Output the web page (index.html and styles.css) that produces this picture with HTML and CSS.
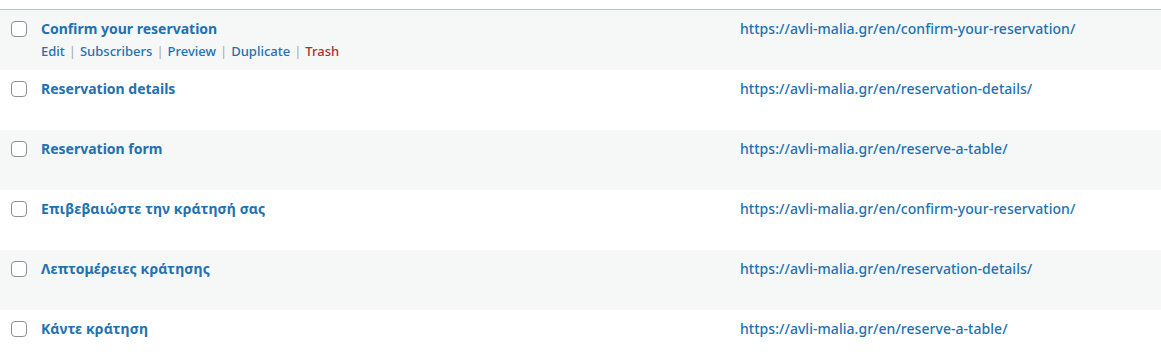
FILE: index.html
```html
<!DOCTYPE html>
<html lang="en">
<head>
<meta charset="utf-8">
<title>Forms</title>
<link rel="stylesheet" href="styles.css">
</head>
<body>
<div class="table">
  <div class="row alt">
    <div class="cb"><span class="box"></span></div>
    <div class="title">
      <a class="name" href="#">Confirm your reservation</a>
      <div class="actions">
        <a href="#">Edit</a><span class="sep">|</span><a href="#">Subscribers</a><span class="sep">|</span><a href="#">Preview</a><span class="sep">|</span><a href="#">Duplicate</a><span class="sep">|</span><a href="#" class="trash">Trash</a>
      </div>
    </div>
    <div class="url"><a href="#">https://avli-malia.gr/en/confirm-your-reservation/</a></div>
  </div>
  <div class="row">
    <div class="cb"><span class="box"></span></div>
    <div class="title"><a class="name" href="#">Reservation details</a></div>
    <div class="url"><a href="#">https://avli-malia.gr/en/reservation-details/</a></div>
  </div>
  <div class="row alt">
    <div class="cb"><span class="box"></span></div>
    <div class="title"><a class="name" href="#">Reservation form</a></div>
    <div class="url"><a href="#">https://avli-malia.gr/en/reserve-a-table/</a></div>
  </div>
  <div class="row">
    <div class="cb"><span class="box"></span></div>
    <div class="title"><a class="name greek" href="#" lang="el">Επιβεβαιώστε την κράτησή σας</a></div>
    <div class="url"><a href="#">https://avli-malia.gr/en/confirm-your-reservation/</a></div>
  </div>
  <div class="row alt">
    <div class="cb"><span class="box"></span></div>
    <div class="title"><a class="name greek" href="#" lang="el">Λεπτομέρειες κράτησης</a></div>
    <div class="url"><a href="#">https://avli-malia.gr/en/reservation-details/</a></div>
  </div>
  <div class="row">
    <div class="cb"><span class="box"></span></div>
    <div class="title"><a class="name greek" href="#" lang="el">Κάντε κράτηση</a></div>
    <div class="url"><a href="#">https://avli-malia.gr/en/reserve-a-table/</a></div>
  </div>
</div>
</body>
</html>
```
FILE: styles.css
```css
* { box-sizing: border-box; }
html, body { margin: 0; padding: 0; background: #fff; }
body {
  font-family: "Noto Sans", "Open Sans", sans-serif;
  color: #2271b1;
  padding-top: 9px;
}
a { color: #2271b1; text-decoration: none; }
.table { border-top: 1px solid #c3c4c7; }
.row {
  display: grid;
  grid-template-columns: 41px 699px 1fr;
  height: 60px;
  background: #fff;
}
.row.alt { background: #f6f7f7; }
.cb { padding: 11px 0 0 11px; }
.box {
  display: block;
  width: 16px;
  height: 16px;
  border: 1px solid #8c8f94;
  border-radius: 4px;
  background: #fff;
}
.title, .url { padding-top: 9px; }
.name, .url a {
  font-size: 14px;
  line-height: 20px;
  display: block;
}
.name { font-weight: 700; }
.name.greek { letter-spacing: 0.13px; }
.url a { font-weight: 500; letter-spacing: 0.04px; }
.actions {
  padding-top: 3px;
  font-size: 13px;
  font-weight: 500;
  line-height: 19px;
  display: flex;
}
.sep { color: #a7aaad; font-weight: 400; margin: 0 4px; }
.trash { color: #b32d2e; }
```
